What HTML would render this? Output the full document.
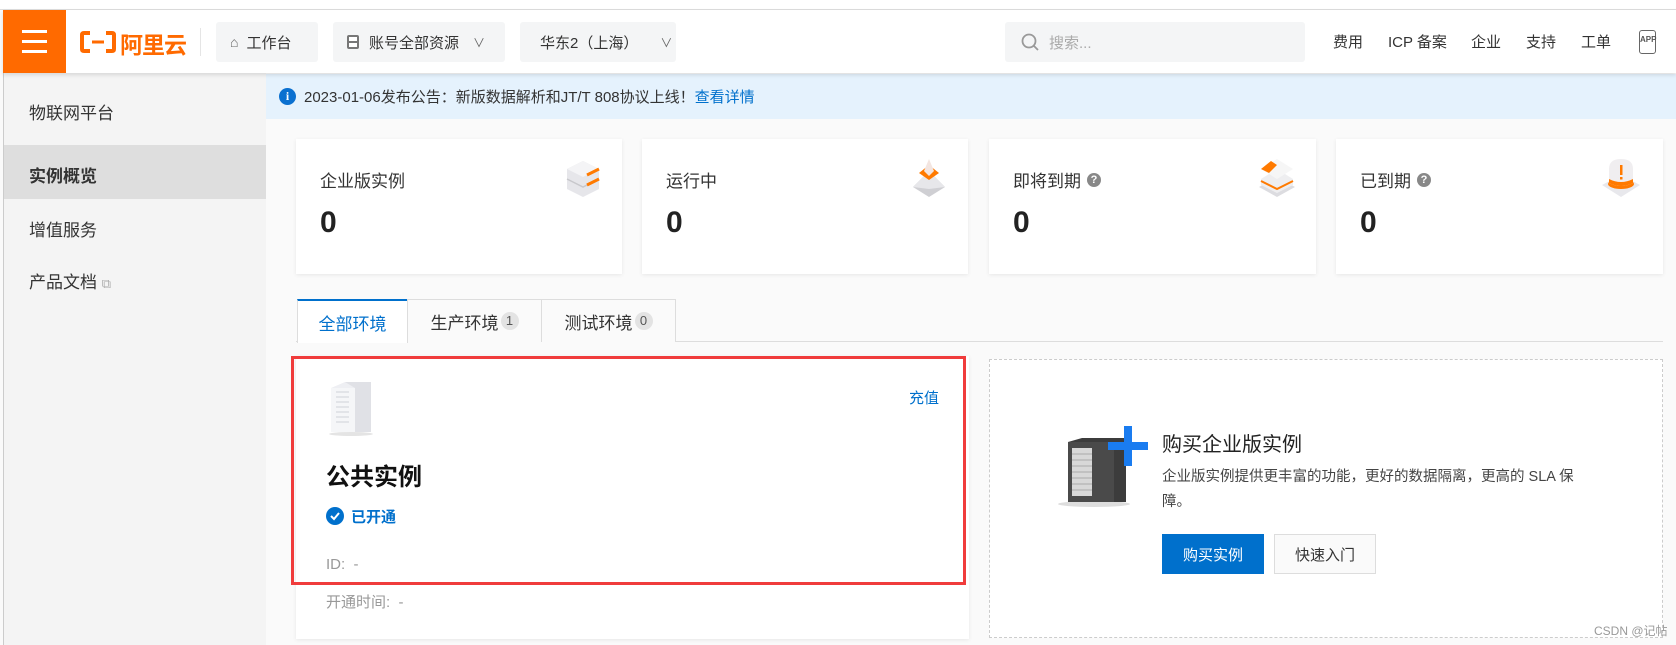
<!DOCTYPE html>
<html><head><meta charset="utf-8"><style>
*{box-sizing:border-box;margin:0;padding:0}
body{width:1676px;height:645px;overflow:hidden;background:#fafafa;font-family:"Liberation Sans","Noto Sans CJK SC",sans-serif;color:#333;position:relative}
.a{position:absolute}
.top{left:0;top:0;width:1676px;height:10px;background:#fff;border-bottom:1px solid #ddd}
.hdr{left:3px;top:10px;width:1673px;height:63px;background:#fff;box-shadow:0 2px 4px rgba(0,0,0,.12);z-index:2}
.btn{background:#f4f5f6;border-radius:3px;height:40px;top:12px;font-size:15px;color:#333;display:flex;align-items:center}
.side{left:3px;top:73px;width:263px;height:572px;background:#f4f4f4;border-left:1px solid #ccc}
.si{left:25px;font-size:17px;color:#333}
.card{background:#fff;box-shadow:0 1px 4px rgba(0,0,0,.08)}
.ct{font-size:17px;color:#333;left:24px;top:28px;display:flex;align-items:center}
.cn{font-size:30px;font-weight:bold;color:#222;left:24px;top:67px}
.q{display:inline-block;width:14px;height:14px;border-radius:50%;background:#888;color:#fff;font-size:11px;font-weight:bold;text-align:center;line-height:14px;margin-left:6px}
.tab{top:299px;height:43px;border:1px solid #ddd;border-bottom:none;background:#fff;font-size:17px;display:flex;align-items:center;justify-content:center;color:#333}
.bd{display:inline-block;background:#e3e3e3;border-radius:9px;font-size:13px;color:#555;width:18px;height:18px;line-height:18px;text-align:center;margin-left:2px}
.nav{top:21px;font-size:15px;color:#333}
</style></head><body>
<div class="a top"></div>
<div class="a hdr">
  <div class="a" style="left:0;top:0;width:63px;height:63px;background:#ff6a00">
    <div class="a" style="left:19px;top:20px;width:25px;height:3px;background:#fff"></div>
    <div class="a" style="left:19px;top:30px;width:25px;height:3px;background:#fff"></div>
    <div class="a" style="left:19px;top:40px;width:25px;height:3px;background:#fff"></div>
  </div>
  <svg class="a" style="left:77px;top:21px" width="36" height="22" viewBox="0 0 36 22"><path d="M10 2H4Q2 2 2 4V18Q2 20 4 20H10M26 2H32Q34 2 34 4V18Q34 20 32 20H26" fill="none" stroke="#ff6a00" stroke-width="4"/><rect x="12" y="9.5" width="12" height="3" fill="#ff6a00"/></svg>
  <div class="a" style="left:117px;top:16px;font-size:23px;font-weight:bold;color:#ff6a00;letter-spacing:-1px">阿里云</div>
  <div class="a" style="left:197px;top:18px;width:1px;height:28px;background:#e5e5e5"></div>
  <div class="a btn" style="left:213px;width:102px;padding-left:14px"><span style="font-size:14px;color:#666;margin-right:8px">⌂</span>工作台</div>
  <div class="a btn" style="left:330px;width:172px;padding-left:14px"><span style="display:inline-block;width:12px;height:14px;border:2px solid #777;border-radius:2px;margin-right:10px;background:linear-gradient(#fff 4px,#777 4px,#777 6px,#fff 6px)"></span>账号全部资源<span style="margin-left:14px;color:#666;font-size:12px">∨</span></div>
  <div class="a btn" style="left:517px;width:156px;padding-left:20px">华东2（上海）<span style="margin-left:22px;color:#666;font-size:12px">∨</span></div>
  <div class="a btn" style="left:1002px;width:300px;padding-left:16px;color:#aaa"><svg width="18" height="18" viewBox="0 0 18 18" style="margin-right:10px"><circle cx="8" cy="8" r="6.5" fill="none" stroke="#999" stroke-width="1.8"/><path d="M13 13L17 17" stroke="#999" stroke-width="1.8"/></svg>搜索...</div>
  <div class="a nav" style="left:1330px">费用</div>
  <div class="a nav" style="left:1385px">ICP 备案</div>
  <div class="a nav" style="left:1468px">企业</div>
  <div class="a nav" style="left:1523px">支持</div>
  <div class="a nav" style="left:1578px">工单</div>
  <div class="a" style="left:1636px;top:20px;width:17px;height:24px;border:1.5px solid #666;border-radius:3px;font-size:8px;font-weight:bold;color:#555;text-align:center;line-height:18px">APP</div>
</div>
<div class="a side">
  <div class="a si" style="top:26px">物联网平台</div>
  <div class="a" style="left:0;top:72px;width:262px;height:54px;background:#dedede"></div>
  <div class="a si" style="top:89px;font-weight:bold">实例概览</div>
  <div class="a si" style="top:143px">增值服务</div>
  <div class="a si" style="top:195px">产品文档 <span style="font-size:13px;color:#aaa">⧉</span></div>
</div>
<div class="a" style="left:266px;top:74px;width:1410px;height:45px;background:#e5f2fd"></div>
<div class="a" style="left:279px;top:88px;width:17px;height:17px;border-radius:50%;background:#0a70d0;color:#fff;font-size:12px;font-weight:bold;text-align:center;line-height:17px;font-family:'Liberation Serif',serif">i</div>
<div class="a" style="left:304px;top:86px;font-size:15px;color:#333">2023-01-06发布公告：新版数据解析和JT/T 808协议上线！<span style="color:#0070cc">查看详情</span></div>

<div class="a card" style="left:296px;top:139px;width:326px;height:135px">
  <div class="a ct">企业版实例</div><div class="a cn">0</div>
  <svg class="a" style="left:269px;top:20px" width="36" height="40" viewBox="0 0 36 40"><path d="M18 2L34 10V30L18 38L2 30V10Z" fill="#e6e6ea"/><path d="M2 10L18 18L34 10L18 2Z" fill="#f4f4f6"/><path d="M2 20L18 28L34 20" fill="none" stroke="#c8c8cc" stroke-width="1.5"/><path d="M22 16L34 10M22 26L34 20" stroke="#ff7a00" stroke-width="3"/></svg>
</div>
<div class="a card" style="left:642px;top:139px;width:326px;height:135px">
  <div class="a ct">运行中</div><div class="a cn">0</div>
  <svg class="a" style="left:269px;top:18px" width="36" height="42" viewBox="0 0 36 42"><path d="M18 14L34 30L18 40L2 30Z" fill="#cfcfd3"/><path d="M18 14L34 30L18 32L2 30Z" fill="#e7e7ea"/><path d="M18 8L28 16L18 23L8 16Z" fill="#ff7a00"/><path d="M18 2L23 14L18 19L13 14Z" fill="#f3e5e0"/></svg>
</div>
<div class="a card" style="left:989px;top:139px;width:327px;height:135px">
  <div class="a ct">即将到期<span class="q">?</span></div><div class="a cn">0</div>
  <svg class="a" style="left:268px;top:18px" width="40" height="42" viewBox="0 0 40 42"><path d="M20 20L38 30L20 40L2 30Z" fill="#dcdce0"/><path d="M20 12L36 22V28L20 36L4 28V22Z" fill="#eeeef0"/><path d="M4 24L20 32L36 24" fill="none" stroke="#ff7a00" stroke-width="2"/><path d="M20 2L36 12L20 22L4 12Z" fill="#f6f6f6"/><path d="M4 12L14 4L20 8L12 16Z" fill="#ff7a00"/></svg>
</div>
<div class="a card" style="left:1336px;top:139px;width:327px;height:135px">
  <div class="a ct">已到期<span class="q">?</span></div><div class="a cn">0</div>
  <svg class="a" style="left:264px;top:18px" width="42" height="42" viewBox="0 0 42 42"><path d="M21 18L40 28L21 40L2 28Z" fill="#e8e8ec"/><ellipse cx="21" cy="27" rx="13" ry="5" fill="#ff7a00"/><path d="M9 26V12Q9 2 21 2Q33 2 33 12V26Q21 32 9 26Z" fill="#f0eef0"/><path d="M9 22Q21 28 33 22V26Q21 32 9 26Z" fill="#ff7a00"/><rect x="20" y="8" width="2.5" height="10" fill="#ff7a00"/><rect x="20" y="20" width="2.5" height="2.5" fill="#ff7a00"/></svg>
</div>

<div class="a" style="left:296px;top:341px;width:1367px;height:1px;background:#ddd"></div>
<div class="a tab" style="left:297px;width:111px;border-top:2px solid #0070cc;color:#0070cc;height:44px">全部环境</div>
<div class="a tab" style="left:407px;width:135px;background:#fafafa">生产环境<span class="bd">1</span></div>
<div class="a tab" style="left:541px;width:135px;background:#fafafa">测试环境<span class="bd">0</span></div>

<div class="a card" style="left:296px;top:356px;width:673px;height:283px"></div>
<div class="a" style="left:291px;top:356px;width:675px;height:229px;border:3px solid #f03c3c"></div>
<svg class="a" style="left:327px;top:382px" width="58" height="55" viewBox="0 0 58 55"><path d="M4 6L18 0H44L44 50H4Z" fill="#eeeff3"/><path d="M18 0H44V50H28V6Z" fill="#e0e1e6"/><path d="M4 6H28V50H4Z" fill="#f5f6f8"/><g stroke="#d0d2d8" stroke-width="1"><path d="M9 10H22M9 15H22M9 20H22M9 25H22M9 30H22M9 35H22M9 40H22"/></g><ellipse cx="24" cy="52" rx="22" ry="2" fill="#e4e4e4"/></svg>
<div class="a" style="left:909px;top:387px;font-size:15px;color:#0070cc">充值</div>
<div class="a" style="left:326px;top:457px;font-size:24px;font-weight:bold;color:#111">公共实例</div>
<svg class="a" style="left:326px;top:507px" width="18" height="18" viewBox="0 0 18 18"><circle cx="9" cy="9" r="9" fill="#0070cc"/><path d="M5 9L8 12L13 6" fill="none" stroke="#fff" stroke-width="2"/></svg>
<div class="a" style="left:351px;top:506px;font-size:15px;color:#0070cc;font-weight:bold">已开通</div>
<div class="a" style="left:326px;top:556px;font-size:15px;color:#999">ID:&nbsp; -</div>
<div class="a" style="left:326px;top:591px;font-size:15px;color:#999">开通时间:&nbsp; -</div>

<div class="a" style="left:989px;top:359px;width:674px;height:279px;border:1px dashed #ccc;background:#fff"></div>
<svg class="a" style="left:1056px;top:426px" width="92" height="82" viewBox="0 0 92 82"><ellipse cx="38" cy="78" rx="36" ry="3" fill="#ddd"/><path d="M12 16L26 12H70V76H12Z" fill="#3c3c3c"/><path d="M12 16H58V76H12Z" fill="#4a4a4a"/><rect x="16" y="22" width="20" height="48" fill="#d8d8d8"/><g stroke="#aaa"><path d="M16 28H36M16 34H36M16 40H36M16 46H36M16 52H36M16 58H36M16 64H36"/></g><path d="M68 0H76V16H92V24H76V40H68V24H52V16H68Z" fill="#1a7cf0"/></svg>
<div class="a" style="left:1162px;top:428px;font-size:20px;color:#222">购买企业版实例</div>
<div class="a" style="left:1162px;top:465px;width:440px;font-size:14.5px;line-height:25px;color:#444">企业版实例提供更丰富的功能，更好的数据隔离，更高的 SLA 保障。</div>
<div class="a" style="left:1162px;top:534px;width:102px;height:40px;background:#0070cc;color:#fff;font-size:15px;display:flex;align-items:center;justify-content:center">购买实例</div>
<div class="a" style="left:1274px;top:534px;width:102px;height:40px;border:1px solid #ddd;background:#fafafa;color:#333;font-size:15px;display:flex;align-items:center;justify-content:center">快速入门</div>
<div class="a" style="left:1594px;top:622px;font-size:12px;color:#999">CSDN @记帖</div>
</body></html>
